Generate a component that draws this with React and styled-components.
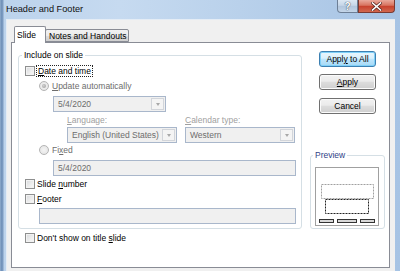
import React from "react";
import styled, { createGlobalStyle } from "styled-components";

const GlobalStyle = createGlobalStyle`
  html, body { margin: 0; padding: 0; }
  body {
    font-family: "Liberation Sans", Arial, sans-serif;
    font-size: 8.5px;
    color: #000;
  }
`;

const Window = styled.div`
  width: 400px;
  height: 271px;
  display: flex;
  flex-direction: column;
  overflow: hidden;
  background: linear-gradient(
    90deg,
    #9db8d6 0px,
    #6f90b8 1px,
    #7d9cc2 3px,
    #bcd3ec 4px,
    #c6daf0 30%,
    #b9d1eb 60%,
    #a6c3e4 100%
  );
`;

const TitleBar = styled.div`
  height: 19px;
  display: flex;
  align-items: flex-start;
  padding: 0 5px 0 6px;
`;

const Title = styled.div`
  flex: 1;
  font-size: 9.2px;
  line-height: 18px;
  color: #111;
`;

const CaptionButton = styled.div`
  height: 13px;
  width: ${(p) => p.w}px;
  display: flex;
  align-items: center;
  justify-content: center;
  border: 1px solid ${(p) => (p.close ? "#7a3a33" : "#6d7f96")};
  border-top: none;
  border-radius: ${(p) => (p.close ? "0 0 4px 0" : "0 0 0 4px")};
  background: ${(p) =>
    p.close
      ? "linear-gradient(#e9a99c 0%, #d8735f 45%, #c7402c 50%, #d2684f 100%)"
      : "linear-gradient(#dce7f2 0%, #c6d6e8 45%, #b1c5dc 50%, #c4d5e8 100%)"};
  color: #fff;
  font-size: 10px;
  font-weight: bold;
  text-shadow: 0 0 1px #3c4c60, 0 0 1px #3c4c60;
  box-sizing: border-box;
`;

const Client = styled.div`
  flex: 1;
  margin: 0 5px 0 6px;
  background: #f0f0f0;
  border-top: 1px solid #e4ecf5;
  border-left: 1px solid #e4ecf5;
  padding: 6px 5px 3px 4px;
  display: flex;
  flex-direction: column;
  min-height: 0;
`;

const TabStrip = styled.div`
  display: flex;
  align-items: flex-end;
  height: 17px;
  padding-left: 3px;
  margin-bottom: -1px;
  position: relative;
  z-index: 1;
`;

const Tab = styled.div`
  box-sizing: border-box;
  height: ${(p) => (p.active ? 17 : 13)}px;
  width: ${(p) => p.w}px;
  margin-left: ${(p) => (p.first ? 0 : -1)}px;
  margin-bottom: ${(p) => (p.active ? 0 : 1)}px;
  border: 1px solid #898c95;
  border-bottom: ${(p) => (p.active ? "none" : "1px solid #898c95")};
  border-radius: 2px 2px 0 0;
  background: ${(p) =>
    p.active ? "#fff" : "linear-gradient(#f2f2f2 0%, #ebebeb 50%, #dddddd 51%, #cfcfcf 100%)"};
  padding-left: ${(p) => (p.active ? 2 : 3)}px;
  line-height: ${(p) => (p.active ? 16 : 13)}px;
  white-space: nowrap;
`;

const Panel = styled.div`
  flex: 1;
  display: flex;
  background: #fff;
  border: 1px solid #898c95;
  padding: 7px 4px 0 6px;
  min-height: 0;
`;

const LeftColumn = styled.div`
  width: 284px;
  display: flex;
  flex-direction: column;
`;

const RightColumn = styled.div`
  width: 75px;
  margin-left: 8px;
  padding-top: 1px;
  display: flex;
  flex-direction: column;
  align-items: center;
`;

const Group = styled.fieldset`
  margin: ${(p) => p.mt || 0}px 0 0 0;
  padding: 0 ${(p) => p.pr}px ${(p) => p.pb}px ${(p) => p.pl}px;
  border: 1px solid #d5dfe5;
  border-radius: 3px;
  min-width: 0;
  width: 100%;
  box-sizing: border-box;
  display: flex;
  flex-direction: column;
`;

const Legend = styled.legend`
  padding: 0 2px;
  margin-left: ${(p) => p.ml}px;
  line-height: 10px;
  height: 10px;
  color: ${(p) => p.color || "#000"};
`;

const Row = styled.div`
  display: flex;
  align-items: center;
  height: ${(p) => p.h || 12}px;
  margin-top: ${(p) => p.mt}px;
  padding-left: ${(p) => p.indent || 0}px;
  color: ${(p) => (p.disabled ? "#6d6d6d" : "#000")};
  white-space: nowrap;
`;

const Checkbox = styled.span`
  width: 10px;
  height: 10px;
  box-sizing: border-box;
  border: 1px solid #8e8f8f;
  background: linear-gradient(135deg, #d6d8db 0%, #eeeeee 60%, #f8f8f8 100%);
  box-shadow: inset 0 0 0 1px #f2f2f2;
  margin-right: 2px;
  flex-shrink: 0;
`;

const Radio = styled.span`
  width: 10px;
  height: 10px;
  box-sizing: border-box;
  border-radius: 50%;
  border: 1px solid #b4b4b4;
  background: radial-gradient(circle, #f4f4f4 0%, #e2e2e2 100%);
  margin-right: 3px;
  display: flex;
  align-items: center;
  justify-content: center;
  flex-shrink: 0;
  &::after {
    content: "";
    display: ${(p) => (p.checked ? "block" : "none")};
    width: 4px;
    height: 4px;
    border-radius: 50%;
    background: radial-gradient(circle at 40% 40%, #d0d0d0, #9a9a9a);
  }
`;

const Focused = styled.span`
  outline: 1px dotted #222;
  outline-offset: 0;
  padding: 0 1px;
  line-height: 10px;
`;

const Key = styled.span`
  text-decoration: underline;
`;

const Combo = styled.div`
  box-sizing: border-box;
  height: 16px;
  width: ${(p) => (p.w ? p.w + "px" : "auto")};
  margin-left: ${(p) => p.indent || 0}px;
  border: 1px solid #a9b7cb;
  background: #f0f0f0;
  color: #6d6d6d;
  display: flex;
  align-items: center;
  padding-left: 4px;
`;

const ComboText = styled.span`
  flex: 1;
`;

const ComboArrow = styled.span`
  box-sizing: border-box;
  width: 13px;
  height: 12px;
  margin-right: 1px;
  border: 1px solid #d2d5da;
  background: #f4f4f4;
  display: flex;
  align-items: center;
  justify-content: center;
  &::after {
    content: "";
    border-left: 2.5px solid transparent;
    border-right: 2.5px solid transparent;
    border-top: 3px solid #a8a8a8;
    margin-top: 1px;
  }
`;

const TextBox = styled.div`
  box-sizing: border-box;
  height: 16px;
  margin-top: ${(p) => p.mt}px;
  margin-left: ${(p) => p.indent}px;
  border: 1px solid #a9b7cb;
  background: #f0f0f0;
  color: #6d6d6d;
  display: flex;
  align-items: center;
  padding-left: 4px;
`;

const FieldGrid = styled.div`
  display: grid;
  grid-template-columns: 110px 110px;
  column-gap: 8px;
  margin-left: 42px;
`;

const FieldLabel = styled.div`
  height: 11px;
  line-height: 11px;
  margin-top: 3px;
  margin-bottom: 1px;
  color: #a0a0a0;
`;

const Button = styled.div`
  box-sizing: border-box;
  width: 57px;
  height: 16px;
  margin-top: ${(p) => p.mt || 0}px;
  border-radius: 3px;
  border: 1px solid ${(p) => (p.primary ? "#3c7fb1" : "#707070")};
  background: ${(p) =>
    p.primary
      ? "linear-gradient(#eaf6fd 0%, #d9f0fc 45%, #bee6fd 50%, #a7d9f5 100%)"
      : "linear-gradient(#f2f2f2 0%, #ebebeb 45%, #dddddd 50%, #cfcfcf 100%)"};
  box-shadow: inset 0 0 0 1px ${(p) => (p.primary ? "#7fd0f8" : "#fbfbfb")};
  display: flex;
  align-items: center;
  justify-content: center;
  white-space: nowrap;
`;

const PreviewArt = styled.svg`
  display: block;
  margin-top: 7px;
`;

function SlidePreview() {
  return (
    <PreviewArt width="64" height="59" viewBox="0 0 64 59">
      <rect x="0.5" y="0.5" width="63" height="58" fill="#fff" stroke="#a0a0a0" />
      <rect x="6.5" y="17.5" width="52" height="14" fill="none" stroke="#a0a0a0" strokeDasharray="2 1" />
      <rect x="10.5" y="32.5" width="43" height="14" fill="none" stroke="#222" strokeDasharray="2 1" />
      <rect x="4.5" y="52.5" width="14" height="3" fill="#d8d8d8" stroke="#333" />
      <rect x="22.5" y="52.5" width="19" height="3" fill="#d8d8d8" stroke="#333" />
      <rect x="45.5" y="52.5" width="14" height="3" fill="#d8d8d8" stroke="#333" />
    </PreviewArt>
  );
}

function CloseGlyph() {
  return (
    <svg width="11" height="9" viewBox="0 0 11 9">
      <path d="M1.5 1 L9.5 8 M9.5 1 L1.5 8" stroke="#5a2a24" strokeWidth="3" strokeLinecap="square" />
      <path d="M1.5 1 L9.5 8 M9.5 1 L1.5 8" stroke="#fff" strokeWidth="1.6" strokeLinecap="square" />
    </svg>
  );
}

export default function App() {
  return (
    <Window>
      <GlobalStyle />
      <TitleBar>
        <Title>Header and Footer</Title>
        <CaptionButton w={21}>?</CaptionButton>
        <CaptionButton w={37} close>
          <CloseGlyph />
        </CaptionButton>
      </TitleBar>
      <Client>
        <TabStrip>
          <Tab active first w={32}>Slide</Tab>
          <Tab w={84}>Notes and Handouts</Tab>
        </TabStrip>
        <Panel>
          <LeftColumn>
            <Group pl={6} pr={5} pb={4}>
              <Legend ml={-3}>Include on slide</Legend>
              <Row mt={5}>
                <Checkbox />
                <Focused>
                  <Key>D</Key>ate and time
                </Focused>
              </Row>
              <Row mt={3} indent={14} disabled>
                <Radio checked />
                <span>
                  <Key>U</Key>pdate automatically
                </span>
              </Row>
              <Row mt={4} h={16}>
                <Combo indent={28} w={113}>
                  <ComboText>5/4/2020</ComboText>
                  <ComboArrow />
                </Combo>
              </Row>
              <FieldGrid>
                <FieldLabel>
                  <Key>L</Key>anguage:
                </FieldLabel>
                <FieldLabel>
                  <Key>C</Key>alendar type:
                </FieldLabel>
                <Combo>
                  <ComboText>English (United States)</ComboText>
                  <ComboArrow />
                </Combo>
                <Combo>
                  <ComboText>Western</ComboText>
                  <ComboArrow />
                </Combo>
              </FieldGrid>
              <Row mt={1} indent={14} disabled>
                <Radio />
                <span>
                  Fi<Key>x</Key>ed
                </span>
              </Row>
              <TextBox mt={4} indent={28}>5/4/2020</TextBox>
              <Row mt={2}>
                <Checkbox />
                <span>
                  Slide <Key>n</Key>umber
                </span>
              </Row>
              <Row mt={3}>
                <Checkbox />
                <span>
                  <Key>F</Key>ooter
                </span>
              </Row>
              <TextBox mt={3} indent={14} />
            </Group>
            <Row mt={3} indent={7}>
              <Checkbox />
              <span>
                Don't show on title <Key>s</Key>lide
              </span>
            </Row>
          </LeftColumn>
          <RightColumn>
            <Button primary>
              <span>
                Appl<Key>y</Key> to All
              </span>
            </Button>
            <Button mt={7}>
              <span>
                <Key>A</Key>pply
              </span>
            </Button>
            <Button mt={8}>Cancel</Button>
            <Group mt={36} pl={4} pr={4} pb={2}>
              <Legend ml={-2} color="#2f3f86">
                Preview
              </Legend>
              <SlidePreview />
            </Group>
          </RightColumn>
        </Panel>
      </Client>
    </Window>
  );
}
